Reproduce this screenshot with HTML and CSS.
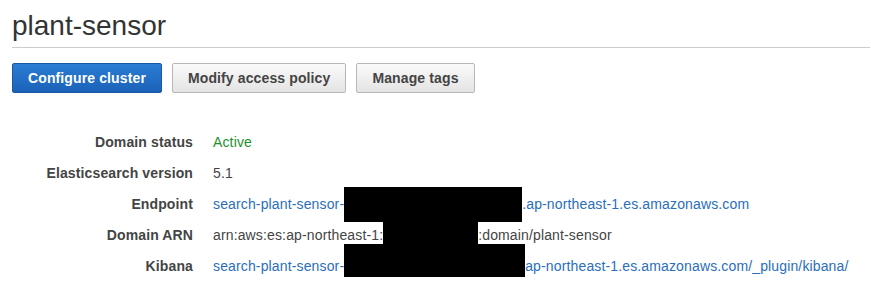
FILE: index.html
```html
<!DOCTYPE html>
<html lang="en">
<head>
    <meta charset="UTF-8">
    <title>plant-sensor</title>
    <link rel="stylesheet" href="styles.css">
</head>
<body>
    <h1 class="title">plant-sensor</h1>

    <div class="actions">
        <button class="btn btn-primary">Configure cluster</button>
        <button class="btn">Modify access policy</button>
        <button class="btn">Manage tags</button>
    </div>

    <div class="details">
        <div class="label">Domain status</div>
        <div class="value status-active">Active</div>

        <div class="label">Elasticsearch version</div>
        <div class="value">5.1</div>

        <div class="label">Endpoint</div>
        <div class="value"><a href="#">search-plant-sensor-<span class="redact redact-endpoint"></span>.ap-northeast-1.es.amazonaws.com</a></div>

        <div class="label">Domain ARN</div>
        <div class="value">arn:aws:es:ap-northeast-1:<span class="redact redact-arn"></span>:domain/plant-sensor</div>

        <div class="label">Kibana</div>
        <div class="value"><a href="#">search-plant-sensor-<span class="redact redact-kibana"></span>ap-northeast-1.es.amazonaws.com/_plugin/kibana/</a></div>
    </div>
</body>
</html>
```

FILE: styles.css
```css
body {
    margin: 0;
    padding: 10px 1px 0 12px;
    background: #fff;
    color: #444;
    font-family: "Liberation Sans", Arial, sans-serif;
    font-size: 14px;
}

.title {
    margin: 0;
    padding-bottom: 5px;
    font-size: 28px;
    font-weight: normal;
    line-height: 32px;
    color: #333;
    border-bottom: 1px solid #ccc;
}

.actions {
    display: flex;
    gap: 10px;
    margin-top: 15px;
}

.btn {
    height: 30px;
    padding: 0 15px;
    font-family: "Liberation Sans", Arial, sans-serif;
    font-size: 14px;
    font-weight: bold;
    letter-spacing: 0.12px;
    color: #444;
    background: linear-gradient(#fafafa, #e4e4e4);
    border: 1px solid #b7b7b7;
    border-radius: 2px;
    cursor: pointer;
}

    .btn-primary {
        color: #fff;
        background: linear-gradient(#2b7dd3, #1a62b8);
        border-color: #1a58a3;
    }

.details {
    display: grid;
    grid-template-columns: 181px auto;
    column-gap: 20px;
    margin-top: 34px;
    line-height: 31px;
}

.label {
    text-align: right;
    font-weight: bold;
    letter-spacing: 0.12px;
    color: #444;
}

.value {
    white-space: nowrap;
    letter-spacing: 0.14px;
}

    .value a {
        color: #2a6ebb;
        text-decoration: none;
    }

.status-active {
    color: #1e8f2e;
}

.redact {
    display: inline-block;
    position: relative;
    height: 31px;
    vertical-align: top;
}

    .redact::before {
        content: '';
        position: absolute;
        left: 0;
        right: 0;
        background: #000;
    }

.redact-endpoint {
    width: 178px;
}

    .redact-endpoint::before {
        top: -2px;
        bottom: -2px;
    }

.redact-arn {
    width: 95px;
}

    .redact-arn::before {
        top: 2px;
        bottom: 7px;
    }

.redact-kibana {
    width: 181px;
}

    .redact-kibana::before {
        top: -7px;
        bottom: 5px;
    }
```
